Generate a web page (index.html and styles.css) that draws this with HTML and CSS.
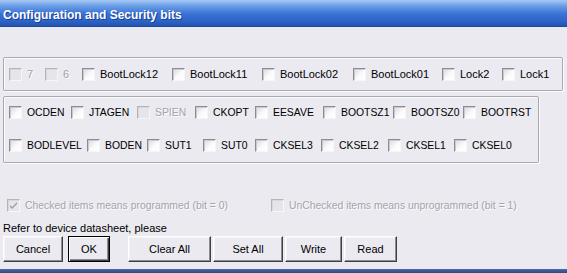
FILE: index.html
```html
<!DOCTYPE html>
<html lang="en">
<head>
    <meta charset="UTF-8">
    <meta name="viewport" content="width=device-width, initial-scale=1.0">
    <title>Configuration and Security bits</title>
    <link rel="stylesheet" href="styles.css">
</head>
<body>
    <div class="titlebar">Configuration and Security bits</div>

    <div class="content">
        <!-- Lock bits -->
        <div class="group group-lock">
            <div class="row row-lock">
                <label class="item disabled"><span class="box"></span>7</label>
                <label class="item disabled"><span class="box"></span>6</label>
                <label class="item"><span class="box"></span>BootLock12</label>
                <label class="item"><span class="box"></span>BootLock11</label>
                <label class="item"><span class="box"></span>BootLock02</label>
                <label class="item"><span class="box"></span>BootLock01</label>
                <label class="item"><span class="box"></span>Lock2</label>
                <label class="item"><span class="box"></span>Lock1</label>
            </div>
        </div>

        <!-- Fuse bits -->
        <div class="group group-fuse">
            <div class="row row-high">
                <label class="item"><span class="box"></span>OCDEN</label>
                <label class="item"><span class="box"></span>JTAGEN</label>
                <label class="item disabled"><span class="box"></span>SPIEN</label>
                <label class="item"><span class="box"></span>CKOPT</label>
                <label class="item"><span class="box"></span>EESAVE</label>
                <label class="item"><span class="box"></span>BOOTSZ1</label>
                <label class="item"><span class="box"></span>BOOTSZ0</label>
                <label class="item"><span class="box"></span>BOOTRST</label>
            </div>
            <div class="row row-low">
                <label class="item"><span class="box"></span>BODLEVEL</label>
                <label class="item"><span class="box"></span>BODEN</label>
                <label class="item"><span class="box"></span>SUT1</label>
                <label class="item"><span class="box"></span>SUT0</label>
                <label class="item"><span class="box"></span>CKSEL3</label>
                <label class="item"><span class="box"></span>CKSEL2</label>
                <label class="item"><span class="box"></span>CKSEL1</label>
                <label class="item"><span class="box"></span>CKSEL0</label>
            </div>
        </div>

        <div class="legend">
            <label class="item disabled">
                <span class="box">
                    <svg width="11" height="11" viewBox="0 0 11 11"><path d="M2 5 L4 7 L9 2 L9 4 L4 9 L2 7 Z" fill="#a0a0a0"/></svg>
                </span>Checked items means programmed (bit = 0)
            </label>
            <label class="item disabled"><span class="box"></span>UnChecked items means unprogrammed (bit = 1)</label>
        </div>

        <div class="note">Refer to device datasheet, please</div>

        <div class="buttons">
            <button class="btn btn-cancel">Cancel</button>
            <button class="btn btn-ok">OK</button>
            <button class="btn btn-clear">Clear All</button>
            <button class="btn btn-set">Set All</button>
            <button class="btn btn-write">Write</button>
            <button class="btn btn-read">Read</button>
        </div>
    </div>

    <div class="frame-bottom"></div>
</body>
</html>
```

FILE: styles.css
```css
body {
    margin: 0;
    height: 273px;
    overflow: hidden;
    background-color: #ebeaf0;
    font-family: "Liberation Sans", Arial, sans-serif;
    font-size: 11px;
    color: #000;
}
.titlebar {
    height: 27px;
    box-sizing: border-box;
    padding: 3px 0 0 3px;
    line-height: 25px;
    font-size: 12px;
    font-weight: bold;
    color: #fff;
    text-shadow: 1px 1px 0 #1c3f8f;
    background: linear-gradient(#a6c8f4 0%, #6a9ee6 22%, #3a74d6 50%, #2c62c6 80%, #2253b0 96%, #1b418e 100%);
}
.content {
    padding-left: 3px;
}
.group {
    border: 1px solid #a9a9b2;
    border-radius: 2px;
    box-shadow: inset 1px 1px 0 #fbfbfd, 1px 1px 0 #fbfbfd;
    box-sizing: border-box;
}
.group-lock {
    margin-top: 30px;
    width: 560px;
    padding: 10px 0 9px 5px;
}
.group-fuse {
    margin-top: 5px;
    width: 536px;
    padding: 9px 0 10px 5px;
    font-size: 10.4px;
}
.row {
    display: grid;
    height: 13px;
}
.row-lock {
    grid-template-columns: 36px 37px 90px 90px 91px 89px 60px auto;
}
.row-high {
    grid-template-columns: 62px 66px 58px 60px 68px 70px 70px auto;
}
.row-low {
    margin-top: 20px;
    grid-template-columns: 78px 60px 56px 52px 66px 67px 66px auto;
}
.item {
    display: flex;
    align-items: center;
    gap: 5px;
    height: 13px;
    line-height: 13px;
    white-space: nowrap;
}
.box {
    flex: none;
    width: 13px;
    height: 13px;
    box-sizing: border-box;
    border-top: 1px solid #8c8c94;
    border-left: 1px solid #8c8c94;
    border-right: 1px solid #f6f6f8;
    border-bottom: 1px solid #f6f6f8;
    box-shadow: inset 1px 1px 0 #c9c9cf;
    background: linear-gradient(135deg, #d9d9de 0%, #fafafa 55%, #ffffff 100%);
}
.box svg {
    display: block;
}
.disabled {
    color: #a4a4aa;
    text-shadow: 1px 1px 0 #fcfcfe;
}
.disabled .box {
    border-top-color: #b4b4ba;
    border-left-color: #b4b4ba;
    box-shadow: inset 1px 1px 0 #d6d6db;
    background: #e6e6ea;
}
.legend {
    margin-top: 36px;
    padding-left: 4px;
    display: grid;
    grid-template-columns: 264px auto;
    font-size: 10.4px;
}
.note {
    margin-top: 10px;
    line-height: 13px;
}
.buttons {
    margin-top: 1px;
    display: flex;
}
.btn {
    height: 26px;
    padding: 0;
    font-family: "Liberation Sans", Arial, sans-serif;
    font-size: 11px;
    color: #000;
    background-color: #ebeaf0;
    border: 1px solid;
    border-color: #ffffff #404040 #404040 #ffffff;
    box-shadow: inset -1px -1px 0 #8c8c94, inset 1px 1px 0 #f4f4f6;
    border-radius: 0;
}
.btn-cancel {
    width: 60px;
}
.btn-ok {
    width: 42px;
    margin-left: 5px;
    border-color: #000;
    box-shadow: inset 1px 1px 0 #fff, inset -1px -1px 0 #404040, inset -2px -2px 0 #8c8c94;
}
.btn-clear {
    width: 83px;
    margin-left: 18px;
}
.btn-set {
    width: 70px;
    margin-left: 2px;
}
.btn-write {
    width: 57px;
    margin-left: 2px;
}
.btn-read {
    width: 53px;
    margin-left: 2px;
}
.frame-bottom {
    margin-top: 7px;
    height: 4px;
    background: linear-gradient(#4d6aa6, #2b4784);
}
```
